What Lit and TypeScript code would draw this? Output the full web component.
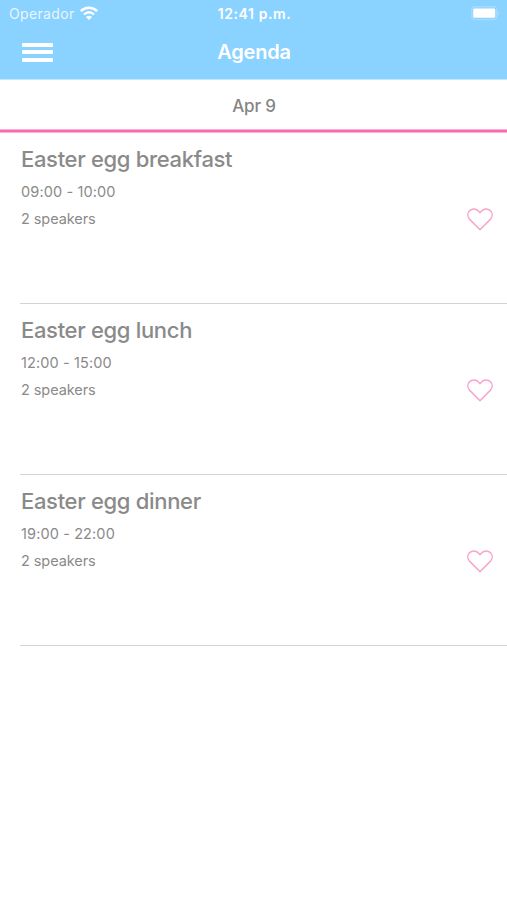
import { LitElement, html, css } from "lit";
import { customElement, property } from "lit/decorators.js";

interface Session {
  title: string;
  time: string;
  speakers: number;
}

const SESSIONS: Session[] = [
  { title: "Easter egg breakfast", time: "09:00 - 10:00", speakers: 2 },
  { title: "Easter egg lunch", time: "12:00 - 15:00", speakers: 2 },
  { title: "Easter egg dinner", time: "19:00 - 22:00", speakers: 2 },
];

@customElement("status-bar")
class StatusBar extends LitElement {
  static styles = css`
    :host {
      display: grid;
      grid-template-columns: 1fr auto 1fr;
      align-items: center;
      height: 27px;
      padding: 0 7px 0 9px;
      color: #fff;
    }
    .carrier {
      display: flex;
      align-items: center;
      gap: 4px;
      font-size: 14px;
      letter-spacing: 0.35px;
      color: #e8f6ff;
    }
    .clock {
      font-size: 14px;
      font-weight: 600;
      letter-spacing: 0.6px;
    }
    .battery {
      justify-self: end;
    }
    svg {
      display: block;
    }
  `;

  render() {
    return html`
      <div class="carrier">
        <span>Operador</span>
        <svg width="20" height="15" viewBox="0 0 20 15" fill="none" stroke="#fff">
          <path d="M1.8 5.2C6.6 .7 13.4 .7 18.2 5.2" stroke-width="2.5" />
          <path d="M4.9 8.5C8 5.8 12 5.8 15.1 8.5" stroke-width="2.3" />
          <path d="M10 14 7 11C8.7 9.4 11.3 9.4 13 11Z" fill="#fff" stroke="none" />
        </svg>
      </div>
      <div class="clock">12:41 p.m.</div>
      <svg class="battery" width="29" height="15" viewBox="0 0 29 15">
        <rect x="0.8" y="0.8" width="24.9" height="12.8" rx="3" fill="none" stroke="#a4dbff" stroke-width="1.4" />
        <rect x="2.2" y="2.6" width="22" height="9.2" rx="1.4" fill="#fff" />
        <path d="M26.8 5V9.8C28.6 9 28.6 5.8 26.8 5Z" fill="#a8ddff" />
      </svg>
    `;
  }
}

@customElement("nav-bar")
class NavBar extends LitElement {
  static styles = css`
    :host {
      display: grid;
      grid-template-columns: 1fr auto 1fr;
      align-items: center;
      height: 50px;
      padding: 0 22px;
      color: #fff;
    }
    .menu {
      display: flex;
      flex-direction: column;
      gap: 3.5px;
      width: 31px;
    }
    .bar {
      height: 4px;
      border-radius: 1px;
      background: #fff;
    }
    .title {
      padding-left: 1px;
      font-size: 20px;
      font-weight: 600;
      line-height: 24px;
      letter-spacing: -0.2px;
    }
  `;

  render() {
    return html`
      <div class="menu">
        <div class="bar"></div>
        <div class="bar"></div>
        <div class="bar"></div>
      </div>
      <div class="title">Agenda</div>
    `;
  }
}

@customElement("session-row")
class SessionRow extends LitElement {
  @property({ attribute: false }) session!: Session;

  static styles = css`
    :host {
      display: flex;
      justify-content: space-between;
      box-sizing: border-box;
      height: 171px;
      margin-left: 20px;
      padding: 12px 14px 0 1px;
      border-bottom: 1px solid #d2d2d2;
      color: #8a8a8a;
    }
    .title {
      font-size: 22px;
      font-weight: 500;
      line-height: 28px;
      letter-spacing: -0.32px;
    }
    .detail {
      font-size: 14.5px;
      line-height: 27px;
      letter-spacing: -0.08px;
    }
    .time {
      margin-top: 5px;
      letter-spacing: 0.12px;
    }
    .heart {
      display: block;
      margin-top: 63px;
    }
  `;

  render() {
    const { title, time, speakers } = this.session;
    return html`
      <div>
        <div class="title">${title}</div>
        <div class="detail time">${time}</div>
        <div class="detail">${speakers} speakers</div>
      </div>
      <svg class="heart" width="26" height="23" viewBox="0 0 26 23" fill="none" stroke="#f9a3cb" stroke-width="1.5" stroke-linejoin="round">
        <path d="M13 21.8 2.7 11.4C.2 8.6 .2 5 2.5 2.7C5.1 .2 8.9 .4 11.2 2.8L13 4.7L14.8 2.8C17.1 .4 20.9 .2 23.5 2.7C25.8 5 25.8 8.6 23.3 11.4Z" />
      </svg>
    `;
  }
}

@customElement("app-root")
class AppRoot extends LitElement {
  static styles = css`
    :host {
      display: block;
      height: 900px;
      overflow: hidden;
      background: #fff;
      font-family: Inter, "Liberation Sans", sans-serif;
    }
    .header {
      box-sizing: border-box;
      height: 79px;
      background: #8ad2ff;
    }
    .edge {
      height: 1px;
      background: #c4e7fe;
    }
    .date {
      display: flex;
      align-items: center;
      justify-content: center;
      box-sizing: border-box;
      height: 49px;
      padding: 3px 0 0 1px;
      color: #858585;
      font-size: 17px;
      font-weight: 500;
      letter-spacing: -0.15px;
    }
    .rule {
      box-sizing: border-box;
      height: 4px;
      border: solid #fbb0d8;
      border-width: 1px 0;
      background: #f968b4;
    }
  `;

  render() {
    return html`
      <div class="header">
        <status-bar></status-bar>
        <nav-bar></nav-bar>
      </div>
      <div class="edge"></div>
      <div class="date">Apr 9</div>
      <div class="rule"></div>
      ${SESSIONS.map((s) => html`<session-row .session=${s}></session-row>`)}
    `;
  }
}
